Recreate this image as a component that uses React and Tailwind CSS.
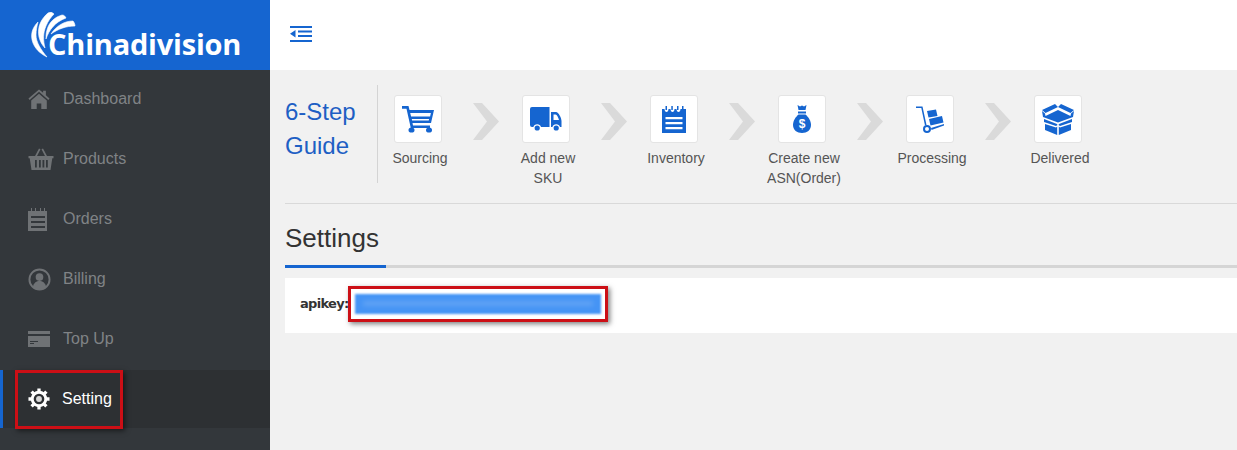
const menu = [
  { label: 'Dashboard', icon: HomeIcon },
  { label: 'Products', icon: BasketIcon },
  { label: 'Orders', icon: NotepadIcon },
  { label: 'Billing', icon: UserIcon },
  { label: 'Top Up', icon: CardIcon },
];

const steps = [
  { label: ['Sourcing'], icon: CartIcon },
  { label: ['Add new', 'SKU'], icon: TruckIcon },
  { label: ['Inventory'], icon: ListIcon },
  { label: ['Create new', 'ASN(Order)'], icon: BagIcon },
  { label: ['Processing'], icon: TrolleyIcon },
  { label: ['Delivered'], icon: BoxIcon },
];

function HomeIcon() {
  return (
    <svg viewBox="0 0 24 24" className="w-[22px] h-[22px] fill-[#6f7275]">
      <path d="M12 1.500 0.500 11.500l1.300 1.500L12 4.200l10.200 8.800 1.300-1.500-4-3.500V3h-3v2.300z" />
      <path d="M3.500 13.500 12 6.200l8.500 7.300V23h-6v-6h-5v6h-6z" />
    </svg>
  );
}

function BasketIcon() {
  return (
    <svg viewBox="0 0 26 24" className="w-[26px] h-[24px] fill-[#6f7275]">
      <path d="M0.500 9h25v2.200h-1.200L22.500 23h-19L1.700 11.200H0.500z" />
      <path d="M6.500 10 11 1.500l1.500.8L8.500 10zM19.500 10 15 1.500l-1.500.8 4 7.700z" />
      <path d="M7 13h1.800v7.500H7zM11 13h1.800v7.500H11zM14.500 13h1.800v7.500h-1.800zM18 13h1.800v7.500H18z" fill="#33373b" />
    </svg>
  );
}

function NotepadIcon() {
  return (
    <svg viewBox="0 0 20 23" className="w-[20px] h-[23px] fill-[#6f7275]">
      <path fillRule="evenodd" d="M0 3h3V0h1v3h3V0h1v3h4V0h1v3h3V0h1v3h2v20H0zM3 8v2h14V8zm0 5v2h14v-2zm0 5v2h14v-2z" />
    </svg>
  );
}

function UserIcon() {
  return (
    <svg viewBox="0 0 24 24" className="w-[23px] h-[23px]">
      <circle cx="12" cy="12" r="10.500" fill="#33373b" stroke="#6f7275" strokeWidth="2" />
      <circle cx="12" cy="9.500" r="4" fill="#6f7275" />
      <path d="M5 20c1-5 4-6.500 7-6.500s6 1.500 7 6.500c-2 1.800-4.500 2.800-7 2.800S7 21.800 5 20z" fill="#6f7275" />
    </svg>
  );
}

function CardIcon() {
  return (
    <svg viewBox="0 0 22 16" className="w-[22px] h-[16px] fill-[#6f7275]">
      <path fillRule="evenodd" d="M0 0h22v3H0zM0 5h22v11H0zM2 10v1h8v-1zm0 2v1h4v-1z" />
    </svg>
  );
}

function GearIcon() {
  return (
    <svg viewBox="0 0 24 24" className="w-[22px] h-[22px]">
      <circle cx="12" cy="12" r="9" fill="#fff" />
      <g stroke="#fff" strokeWidth="3.600">
        <path d="M12 0.500v4M12 19.500v4M0.500 12h4M19.500 12h4M3.900 3.900l2.800 2.800M17.300 17.300l2.800 2.800M20.100 3.900l-2.800 2.800M6.700 17.300l-2.800 2.800" />
      </g>
      <circle cx="12" cy="12" r="5.800" fill="#2d3033" />
      <circle cx="12" cy="12" r="3.200" fill="#d8d8d8" />
    </svg>
  );
}

function CartIcon() {
  return (
    <svg viewBox="0 0 32 28" className="w-[32px] h-[28px] fill-[#1565d0]">
      <path d="M0 1h6.500l1 4H32l-3 13H10.500l.5 2.500H28v2.600H8.800L4.500 3.700H0zM8.200 8l.9 3.500h19l.8-3.500zM9.800 14l.3 1.500h16.600l.4-1.500z" fillRule="evenodd" />
      <ellipse cx="9.500" cy="25" rx="3" ry="2.600" />
      <ellipse cx="27" cy="25" rx="3" ry="2.600" />
    </svg>
  );
}

function TruckIcon() {
  return (
    <svg viewBox="0 0 32 24" className="w-[32px] h-[24px] fill-[#1565d0]">
      <path d="M2 0h17.500v20H11a4 4 0 0 0-7.600 0H2a2 2 0 0 1-2-2V2a2 2 0 0 1 2-2z" />
      <path fillRule="evenodd" d="M21 5h5c2.500 0 5.500 6 5.500 9v6H30a4 4 0 0 0-7.600 0H21zM23.500 7.500V13h5.500c-.5-2-2-5.500-3.500-5.500z" />
      <circle cx="7.200" cy="21" r="2.600" />
      <circle cx="26.200" cy="21" r="2.600" />
    </svg>
  );
}

function ListIcon() {
  return (
    <svg viewBox="0 0 24 27" className="w-[24px] h-[27px] fill-[#1565d0]">
      <path fillRule="evenodd" d="M0 3h2.500c0 2 1 3 2 3s2-1 2-3h2c0 2 1 3 2 3s2-1 2-3h2c0 2 1 3 2 3s2-1 2-3H24v24H0zM3.500 11v2.200h17V11zm0 5v2.200h17V16zm0 5v2.200h17V21z" />
      <path d="M3.500 0h1.500v4H3.500zM9.300 0h1.500v4H9.300zM15 0h1.500v4H15zM20 0h1.500v4H20z" />
    </svg>
  );
}

function BagIcon() {
  return (
    <svg viewBox="0 0 18 28" className="w-[18px] h-[28px] fill-[#1565d0]">
      <path d="M4.500 0 7 1.500 9 .5l2 1 2.500-1.500-1 5h-7z" />
      <path d="M5 6.500h8v2H5z" />
      <path d="M5.500 9.500h7C15.500 12 18 16 18 20c0 5-4 8-9 8s-9-3-9-8c0-4 2.500-8 5.500-10.500z" />
      <text x="9" y="23" textAnchor="middle" fontSize="12" fontWeight="700" fill="#fff" fontFamily="Liberation Sans, sans-serif">$</text>
    </svg>
  );
}

function TrolleyIcon() {
  return (
    <svg viewBox="0 0 28 27" className="w-[28px] h-[27px] fill-[#1565d0]">
      <path d="M0 0.500h6.500l4 18.500-1.500.4L5.300 2H0z" />
      <path d="M11 5l9-1.500 1.500 6.500-9 1.500zM13 13l13-3 1.500 6.500-13 3z" />
      <path d="M15 22l13-4v1.500L15.500 24z" />
      <circle cx="11" cy="23" r="3" fill="none" stroke="#1565d0" strokeWidth="2" />
    </svg>
  );
}

function BoxIcon() {
  return (
    <svg viewBox="0 0 32 31" className="w-[32px] h-[31px] fill-[#1565d0]">
      <path d="M13 0 16 3 3.500 9 0 6zM19 0 16 3l12.500 6L32 6z" />
      <path d="M0 7l3 2.500L3.500 12 16 6 28.500 12 29 9.500 32 7l-1 6-15 5.500L1 13z" />
      <path d="M2 15l13 5 .5 1-1.500 1-12-4zM30 15 17 20l-.5 1 1.500 1 12-4z" />
      <path d="M3 20l11 3.500 1.200-1V31L3 26zM29 20l-11 3.500-1.200-1V31L29 26z" />
    </svg>
  );
}

function Swoosh() {
  return (
    <svg viewBox="0 0 50 46" className="w-[50px] h-[46px] shrink-0 fill-white stroke-white stroke-[0.6]">
      <path d="M9 10C3 16 1 23 4 31c2 5 6 10 14 14C12 38 7 30 7 23c0-5 1-9 2-13z" />
      <path d="M19 1C12 7 8 15 10 25c1 4 3 8 6 11-2-8-2-15 1-22 2-5 5-9 8-12-2-2-4-2-6-1z" />
      <path d="M33 3c-7 2-13 7-15 15-1 3-1 6-1 9 3-9 9-17 20-21-1-2-2-3-4-3z" />
      <path d="M44 9c-8 0-16 4-22 13 7-5 15-8 24-8 0-2-1-4-2-5z" />
    </svg>
  );
}

function MenuRow({ label, icon: Icon }) {
  return (
    <div className="h-[60px] flex items-center pl-[28px]">
      <div className="w-[35px] flex items-center">
        <Icon />
      </div>
      <span className="text-[16px] text-[#808386]">{label}</span>
    </div>
  );
}

function Chevron() {
  return (
    <svg viewBox="0 0 26 37" className="w-[26px] h-[37px] fill-[#dadada] ml-[31px] mr-[23px] mt-[8px]">
      <path d="M0 0h9l17 18.500L9 37H0l14-18.500z" />
    </svg>
  );
}

export default function App() {
  return (
    <div className="flex w-[1237px] h-[450px] overflow-hidden font-['Liberation_Sans',Arial,sans-serif]">
      <aside className="w-[270px] shrink-0 bg-[#33373b]">
        <div className="h-[70px] bg-[#1565d0] flex items-center pl-[29px]">
          <Swoosh />
          <span className="-ml-[31px] mt-[18px] text-[29px] leading-[36px] font-bold text-white font-['Open_Sans',sans-serif] tracking-[-0.2px]">
            Chinadivision
          </span>
        </div>
        <div className="-mt-[1px]">
          {menu.map((item) => (
            <MenuRow key={item.label} {...item} />
          ))}
        </div>
        <div className="relative h-[58px] mt-[1px] bg-[#2d3033] border-l-[3px] border-[#1565d0] flex items-center pl-[25px]">
          <div className="w-[34px] flex items-center">
            <GearIcon />
          </div>
          <span className="text-[16px] text-white">Setting</span>
          <div className="absolute left-[12px] top-0 w-[108px] h-[59px] border-[3px] border-[#cc0f16] shadow-[2px_2px_5px_rgba(0,0,0,0.5)]" />
        </div>
      </aside>

      <main className="flex-1 bg-[#f1f1f1]">
        <div className="h-[70px] bg-white flex items-center pl-[20px]">
          <svg viewBox="0 0 22 16" className="w-[22px] h-[16px] fill-[#1565d0] -mt-[2px]">
            <path d="M0 0h22v2H0zM8 4.500h14v2H8zM8 9h14v2H8zM0 14h22v2H0zM5.500 4 0 7.700l5.500 3.800z" />
          </svg>
        </div>

        <div className="flex h-[134px] ml-[15px] border-b border-[#d9d9d9] pt-[15px]">
          <div className="w-[93px] h-[98px] border-r border-[#d4d4d4] text-[24px] leading-[34px] text-[#1e5fc4] pt-[10px] shrink-0">
            6-Step
            <br />
            Guide
          </div>
          <div className="flex ml-[16px] pt-[10px]">
            {steps.map(({ label, icon: Icon }, i) => (
              <div key={label[0]} className="flex items-start">
                <div className="w-[48px] flex flex-col items-center">
                  <div className="w-[48px] h-[48px] bg-white border border-[#e4e4e4] rounded-[3px] flex items-center justify-center">
                    <Icon />
                  </div>
                  <div className="mt-[5px] ml-[4px] text-[14px] leading-[20px] text-[#555] text-center whitespace-nowrap">
                    {label.map((line) => (
                      <div key={line}>{line}</div>
                    ))}
                  </div>
                </div>
                {i < steps.length - 1 && <Chevron />}
              </div>
            ))}
          </div>
        </div>

        <div className="ml-[15px] h-[64px] border-b-[3px] border-[#d5d5d5] relative">
          <h2 className="text-[26px] leading-[30px] text-[#333] pt-[19px]">Settings</h2>
          <div className="absolute left-0 -bottom-[3px] w-[101px] h-[3px] bg-[#1565d0]" />
        </div>

        <div className="ml-[15px] mt-[10px] h-[55px] bg-white flex items-center pl-[15px] pb-[4px]">
          <span className="w-[48px] text-[13px] font-bold text-[#333] whitespace-nowrap font-['DejaVu_Sans',sans-serif] tracking-[-0.7px]">apikey:</span>
          <div className="ml-0 w-[260px] h-[36px] border-[3px] border-[#cc0f16] shadow-[2px_2px_5px_rgba(0,0,0,0.5)] flex items-center px-[4px]">
            <div className="w-full h-[20px] bg-[#4594f5] blur-[1px] flex items-center px-[8px]">
              <div className="w-full h-[5px] bg-[#62a3f5] blur-[2px]" />
            </div>
          </div>
        </div>
      </main>
    </div>
  );
}
